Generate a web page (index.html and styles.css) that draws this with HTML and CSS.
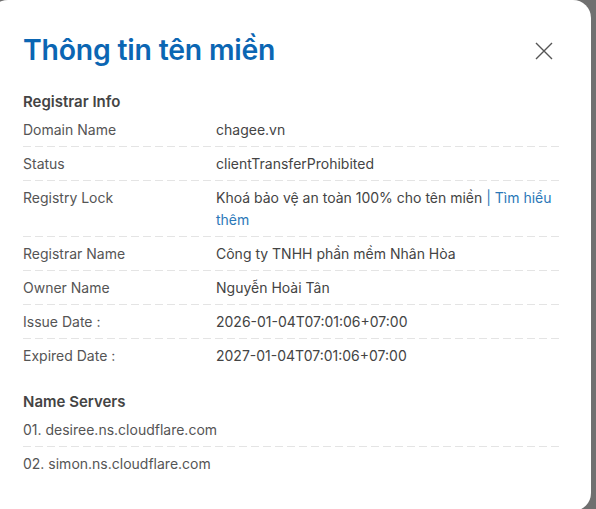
FILE: index.html
```html
<!DOCTYPE html>
<html lang="vi">
<head>
<meta charset="utf-8">
<link rel="stylesheet" href="styles.css">
</head>
<body>
<div class="modal">
  <div class="head">
    <h1 class="title">Thông tin tên miền</h1>
    <button class="close" aria-label="Close">
      <svg width="18" height="18" viewBox="0 0 18 18"><path d="M1 1L17 17M17 1L1 17" stroke="#555" stroke-width="1.4" fill="none"/></svg>
    </button>
  </div>
  <section class="section">
    <h2 class="sec-title">Registrar Info</h2>
    <div class="row"><div class="label">Domain Name</div><div class="value">chagee.vn</div></div>
    <div class="row"><div class="label">Status</div><div class="value">clientTransferProhibited</div></div>
    <div class="row"><div class="label">Registry Lock</div><div class="value">Khoá bảo vệ an toàn 100% cho tên miền <a class="link" href="#">| Tìm hiểu thêm</a></div></div>
    <div class="row"><div class="label">Registrar Name</div><div class="value">Công ty TNHH phần mềm Nhân Hòa</div></div>
    <div class="row"><div class="label">Owner Name</div><div class="value">Nguyễn Hoài Tân</div></div>
    <div class="row"><div class="label">Issue Date :</div><div class="value">2026-01-04T07:01:06+07:00</div></div>
    <div class="row"><div class="label">Expired Date :</div><div class="value">2027-01-04T07:01:06+07:00</div></div>
  </section>
  <section class="section ns">
    <h2 class="sec-title">Name Servers</h2>
    <div class="row"><div class="label wide">01. desiree.ns.cloudflare.com</div></div>
    <div class="row"><div class="label wide">02. simon.ns.cloudflare.com</div></div>
  </section>
</div>
</body>
</html>
```
FILE: styles.css
```css
html, body {
  margin: 0;
  padding: 0;
}
body {
  background: #707070;
  width: 596px;
  height: 509px;
  overflow: hidden;
  font-family: Inter, "Noto Sans", sans-serif;
}
.modal {
  background: #fff;
  margin-left: -10px;
  width: 601px;
  height: 511px;
  border-radius: 18px;
  box-sizing: border-box;
  padding: 32px 32px 0 33px;
}
.head {
  display: flex;
  align-items: center;
  justify-content: space-between;
  height: 36px;
}
.title {
  margin: 0;
  font-size: 28.4px;
  line-height: 36px;
  font-weight: 600;
  color: #0b66b3;
  letter-spacing: -0.2px;
}
.close {
  border: 0;
  background: none;
  padding: 0;
  width: 18px;
  height: 18px;
  margin-right: 6px;
  margin-top: 2px;
  display: flex;
}
.section {
  margin-top: 22px;
}
.section.ns {
  margin-top: 17px;
}
.sec-title {
  margin: 0;
  font-size: 15px;
  line-height: 23px;
  font-weight: 600;
  color: #444;
}
.row {
  display: flex;
  padding: 6px 0;
  font-size: 14px;
  line-height: 22px;
  background-image: repeating-linear-gradient(to right, #e4e4e4 0 8px, transparent 8px 12px);
  background-size: 100% 1px;
  background-position: left bottom;
  background-repeat: no-repeat;
}
.row:last-child {
  background-image: none;
}
.label {
  width: 193px;
  flex: none;
  color: #555;
}
.label.wide {
  width: auto;
}
.value {
  flex: 1;
  color: #444;
}
.link {
  color: #2b78b8;
  text-decoration: none;
}
```
